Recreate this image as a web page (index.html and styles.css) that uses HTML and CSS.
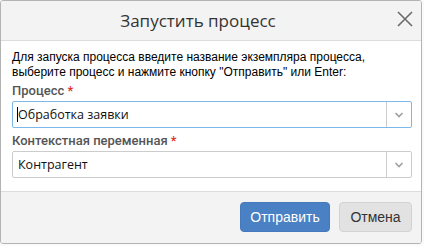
FILE: index.html
```html
<!DOCTYPE html>
<html lang="ru">
<head>
  <meta charset="UTF-8">
  <title>Запустить процесс</title>
  <link rel="stylesheet" href="styles.css">
</head>
<body>

  <div class="dialog">
    <div class="dialog-header">
      <span class="dialog-title">Запустить процесс</span>
      <button class="close" type="button" aria-label="Закрыть">
        <svg width="16" height="16" viewBox="0 0 16 16">
          <path d="M1 1L15 15M15 1L1 15" stroke="#6b6b6b" stroke-width="1.6" fill="none"/>
        </svg>
      </button>
    </div>

    <div class="dialog-body">
      <p class="hint">Для запуска процесса введите название экземпляра процесса, выберите процесс и нажмите кнопку "Отправить" или Enter:</p>

      <label class="field-label">Процесс <span class="req">*</span></label>
      <div class="combo focused">
        <div class="combo-value"><span class="caret"></span>Обработка заявки</div>
        <div class="combo-arrow">
          <svg width="10" height="6" viewBox="0 0 10 6"><path d="M1.5 1L5 4.5L8.5 1" stroke="#a0a0a0" stroke-width="1.6" fill="none"/></svg>
        </div>
      </div>

      <label class="field-label">Контекстная переменная <span class="req">*</span></label>
      <div class="combo">
        <div class="combo-value">Контрагент</div>
        <div class="combo-arrow">
          <svg width="10" height="6" viewBox="0 0 10 6"><path d="M1.5 1L5 4.5L8.5 1" stroke="#a0a0a0" stroke-width="1.6" fill="none"/></svg>
        </div>
      </div>
    </div>

    <div class="dialog-footer">
      <button class="btn btn-primary" type="button">Отправить</button>
      <button class="btn btn-default" type="button">Отмена</button>
    </div>
  </div>

</body>
</html>
```

FILE: styles.css
```css
body {
  margin: 0;
  background-color: #fafafa;
  font-family: "Liberation Sans", Arial, sans-serif;
  color: #333;
}
.dialog {
  width: 420px;
  height: 242px;
  border: 1px solid #b3b3b3;
  border-radius: 3px;
  background-color: #fff;
  display: flex;
  flex-direction: column;
  overflow: hidden;
}
.dialog-header {
  height: 39px;
  background-color: #f3f3f3;
  border-bottom: 1px solid #dcdcdc;
  display: flex;
  align-items: center;
  position: relative;
}
.dialog-title {
  flex: 1;
  text-align: center;
  padding-right: 26px;
  font-family: "Open Sans", sans-serif;
  font-size: 17px;
  color: #333;
}
.close {
  position: absolute;
  right: 8px;
  top: 10px;
  padding: 0;
  border: 0;
  background: none;
  width: 16px;
  height: 16px;
}
.dialog-body {
  flex: 1;
  padding: 9px 9px 0 11px;
}
.hint {
  margin: 0 0 2px 0;
  font-size: 12px;
  line-height: 15px;
  color: #000;
}
.field-label {
  display: block;
  font-family: Roboto, sans-serif;
  font-weight: 500;
  font-size: 13px;
  line-height: 18px;
  color: #555;
  margin-bottom: 1px;
}
.req {
  color: #e0302a;
}
.combo {
  display: flex;
  height: 25px;
  border: 1px solid #ccc;
  border-radius: 2px;
  margin-bottom: 4px;
  background-color: #fff;
}
.combo.focused {
  border-color: #7db8ea;
}
.combo-value {
  flex: 1;
  display: flex;
  align-items: center;
  padding-left: 5px;
  font-family: "Open Sans", sans-serif;
  font-size: 12.5px;
  color: #111;
}
.caret {
  width: 1px;
  height: 15px;
  background-color: #000;
  margin-left: -1px;
}
.combo-arrow {
  width: 24px;
  border-left: 1px solid #ccc;
  display: flex;
  align-items: center;
  justify-content: center;
}
.dialog-footer {
  background-color: #f3f3f3;
  border-top: 1px solid #dcdcdc;
  display: flex;
  justify-content: flex-end;
  align-items: flex-start;
  padding: 10px 9px 0 0;
  box-sizing: border-box;
  height: 52px;
}
.btn {
  height: 30px;
  border-radius: 4px;
  font-family: "Liberation Sans", Arial, sans-serif;
  font-size: 14px;
  padding: 0;
  margin-left: 9px;
}
.btn-primary {
  width: 90px;
  background-color: #4a80c4;
  border: 1px solid #4579bb;
  color: #fff;
}
.btn-default {
  width: 73px;
  background-color: #e2e2e2;
  border: 1px solid #d3d3d3;
  color: #333;
}
```
